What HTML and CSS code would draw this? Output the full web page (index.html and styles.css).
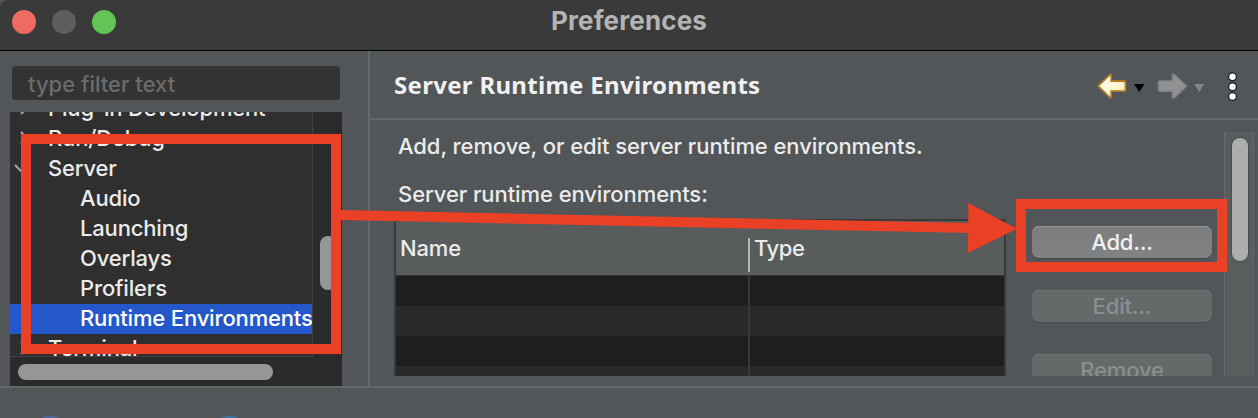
FILE: index.html
```html
<!DOCTYPE html>
<html lang="en">
<head>
<meta charset="utf-8">
<title>Preferences</title>
<link rel="stylesheet" href="styles.css">
</head>
<body>
<div class="window">
  <header class="titlebar">
    <div class="lights"><span class="light close"></span><span class="light minimize"></span><span class="light expand"></span></div>
    <h1 class="window-title"><span>Preferences</span></h1>
  </header>
  <main class="content">
    <aside class="sidebar">
      <div class="filter"><span class="t-filter">type filter text</span></div>
      <div class="tree">
        <div class="tree-view">
          <div class="rows">
            <div class="row parent"><svg class="chevron" viewBox="0 0 12 16"><path d="M3 2l6 6-6 6"/></svg><span class="t-plugin">Plug-in Development</span></div>
            <div class="row parent"><svg class="chevron" viewBox="0 0 12 16"><path d="M3 2l6 6-6 6"/></svg><span class="t-run">Run/Debug</span></div>
            <div class="row parent"><svg class="chevron open" viewBox="0 0 16 12"><path d="M2 3l6 6 6-6"/></svg><span class="t-server">Server</span></div>
            <div class="row child"><span>Audio</span></div>
            <div class="row child"><span>Launching</span></div>
            <div class="row child"><span>Overlays</span></div>
            <div class="row child"><span>Profilers</span></div>
            <div class="row child selected"><span>Runtime Environments</span></div>
            <div class="row parent"><svg class="chevron" viewBox="0 0 12 16"><path d="M3 2l6 6-6 6"/></svg><span>Terminal</span></div>
          </div>
        </div>
        <div class="tree-vscroll"><div class="tree-vthumb"></div></div>
        <div class="tree-hscroll"><div class="tree-hthumb"></div></div>
      </div>
    </aside>
    <section class="page">
      <div class="page-head">
        <h2><span>Server Runtime Environments</span></h2>
        <svg class="nav" width="150" height="40" viewBox="0 0 150 40">
          <defs><linearGradient id="gold" x1="0" y1="0" x2="1" y2="1"><stop offset="0" stop-color="#fff"/><stop offset=".5" stop-color="#fff8d8"/><stop offset="1" stop-color="#ffe9a0"/></linearGradient></defs>
          <path d="M5 20L17 8.700h1.200V15H31q1.500 0 1.500 1.500v7.400q0 1.300-1.500 1.300H18.200v6.500H17z" fill="url(#gold)" stroke="#b17822" stroke-width="1.800"/>
          <path d="M41 18h10.500l-5.250 8z" fill="#000"/>
          <path d="M93.500 20L81.500 8.700h-2V15H67q-1.500 0-1.500 1.500v7.400q0 1.300 1.500 1.300h12.500v6.500h2z" fill="#8f9193" stroke="#808386" stroke-width="1.600"/>
          <path d="M101 18h10.500l-5.250 8z" fill="#828587"/>
          <g fill="#fff" stroke="#17191a" stroke-width="1.300"><circle cx="139.500" cy="10.700" r="3.900"/><circle cx="139.500" cy="20.700" r="3.900"/><circle cx="139.500" cy="30.500" r="3.900"/></g>
        </svg>
      </div>
      <div class="page-body">
        <div class="runtimes">
          <p class="description"><span>Add, remove, or edit server runtime environments.</span></p>
          <p class="label"><span>Server runtime environments:</span></p>
          <div class="table">
            <div class="thead"><div class="th name"><span>Name</span></div><div class="th type"><span>Type</span></div></div>
            <div class="tr"><i></i></div><div class="tr alt"><i></i></div><div class="tr"><i></i></div><div class="tr alt"><i></i></div>
          </div>
        </div>
        <div class="buttons">
          <div class="button"><span>Add...</span></div>
          <div class="button disabled"><span>Edit...</span></div>
          <div class="button disabled"><span>Remove</span></div>
        </div>
        <div class="page-scroll"><div class="page-thumb"></div></div>
      </div>
    </section>
  </main>
  <footer class="footer"><span class="round help"></span><span class="round import"></span></footer>
  <svg class="annotation" viewBox="0 0 1258 418" fill="none" stroke="#ea4025" stroke-width="10">
    <rect x="26" y="139" width="310" height="210"/>
    <rect x="1021" y="204" width="201" height="63"/>
    <path d="M340 215L972 228"/>
    <path d="M968.300 203L1017 228.800 968 253z" fill="#ea4025" stroke="none"/>
  </svg>
</div>
</body>
</html>
```

FILE: styles.css
```css
* { box-sizing: border-box; }
body { margin: 0; background: #525658; font-family: Inter, "Liberation Sans", sans-serif; font-size: 22px; font-weight: 500; letter-spacing: -.16px; color: #ebebeb; }
h1, h2, p { margin: 0; }
span { white-space: nowrap; }
.window { position: relative; width: 1258px; height: 418px; overflow: hidden; display: flex; flex-direction: column; background: #525658; }
.titlebar { height: 51px; flex: none; display: grid; grid-template-columns: 1fr auto 1fr; background: #3a3a3a; border-bottom: 1px solid #000; border-top-left-radius: 8px; }
.lights { display: flex; gap: 16px; padding: 10px 0 0 12px; }
.light { width: 24px; height: 24px; border-radius: 50%; }
.close { background: #ed6b60; }
.minimize { background: #5e5e5e; }
.expand { background: #62c555; }
.window-title { font-size: 26px; font-weight: 700; line-height: 42px; letter-spacing: .15px; color: #b4b4b4; }
.content { height: 335px; flex: none; display: flex; }
.sidebar { width: 370px; padding: 15px 0 0 10px; border-right: 2px solid #636869; }
.filter { width: 328px; height: 34px; margin: 0 0 12px 2px; padding-left: 16px; border-radius: 4px; background: #333; line-height: 36px; letter-spacing: 0; color: #6b6b6b; }
.tree { width: 332px; height: 274px; display: grid; grid-template: 245px 29px / 303px 29px; background: #2b2b2b; overflow: hidden; }
.tree-view { overflow: hidden; background: #2f2f2f; border-right: 1px solid #414141; border-bottom: 1px solid #414141; }
.rows { margin-top: -18px; }
.row { height: 30px; padding-bottom: 2px; display: flex; align-items: center; }
.parent { gap: 20px; padding-left: 8px; }
.child { padding-left: 70px; }
.selected { background: #2457ca; color: #fff; }
.chevron { width: 12px; height: 16px; margin: 0 -2px 0 0; flex: none; fill: none; stroke: #a2a2a2; stroke-width: 2.200; }
.chevron.open { width: 16px; height: 12px; margin: 0 1px 0 -5px; }
.chevron.open + span { margin-left: -2px; }
.tree-vscroll { padding: 124px 0 0 7px; }
.tree-vthumb { width: 16px; height: 54px; border-radius: 8px; background: #969696; }
.tree-hscroll { grid-column: 1 / 3; padding: 7px 0 0 8px; }
.tree-hthumb { width: 255px; height: 16px; border-radius: 8px; background: #969696; }
.page { flex: 1; min-width: 0; display: flex; flex-direction: column; }
.page-head { height: 69px; flex: none; display: flex; justify-content: space-between; padding: 15px 15px 0 24px; border-bottom: 2px solid #636869; }
.page-head h2 { font: 700 24px/38px "Noto Sans", sans-serif; letter-spacing: .3px; color: #f0f0f0; }
.page-body { height: 256px; flex: none; overflow: hidden; display: flex; }
.runtimes { width: 636px; padding-left: 24px; }
.description, .label { padding-left: 4px; line-height: 30px; letter-spacing: -.08px; }
.description { padding-top: 11px; }
.label { padding-top: 18px; }
.table { width: 612px; height: 168px; margin-top: 10px; overflow: hidden; border: 2px solid #393b3b; border-bottom: 0; }
.thead { height: 55px; display: grid; grid-template-columns: 352px 1fr; background: #585c5d; border-bottom: 1px solid #343838; }
.th { line-height: 54px; }
.name { padding-left: 4px; }
.type { height: 34px; margin-top: 17px; padding-left: 4px; border-left: 2px solid #b4b6b6; line-height: 20px; letter-spacing: -.4px; }
.tr { height: 30px; background: #1e1e1e; padding-left: 352px; }
.tr.alt { background: #292929; }
.tr i { display: block; width: 2px; height: 30px; background: #383838; }
.buttons { width: 218px; padding: 106px 12px 0 26px; display: flex; flex-direction: column; gap: 32px; }
.button { height: 32px; flex: none; border-radius: 7px; background: linear-gradient(#7b7d7e, #808283); box-shadow: inset 0 1px #929495, 0 1px 1px #404446; line-height: 33px; text-align: center; color: #f0f0f0; }
.disabled { background: #65696a; color: #8b8e8f; box-shadow: inset 0 1px #707475, 0 1px 1px #484c4e; }
.page-scroll { width: 30px; height: 244px; margin-top: 12px; padding: 6px 0 0 7px; background: #595d5e; border-left: 1px solid #666a6b; border-right: 1px solid #626667; }
.page-thumb { width: 16px; height: 123px; border-radius: 8px; background: #adaeb0; box-shadow: 0 0 1px 1px #4a4d4f; }
.footer { height: 32px; border-top: 2px solid #636869; display: flex; gap: 144px; padding: 28px 0 0 32px; }
.round { width: 36px; height: 36px; flex: none; border-radius: 50%; background: #5369a0; }
.round.import { background: #3b72ae; }
.annotation { position: absolute; inset: 0; width: 1258px; height: 418px; }
```
